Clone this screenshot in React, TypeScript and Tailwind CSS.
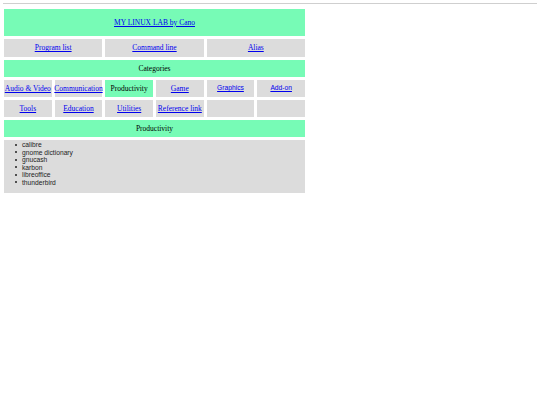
// Linux lab start page: nav table, category grid and the program list of the open category.

const navLinks = ["Program list", "Command line", "Alias"];

type Category = { label: string; sans?: boolean; active?: boolean };

const categoryRows: Category[][] = [
  [
    { label: "Audio & Video" },
    { label: "Communication" },
    { label: "Productivity", active: true },
    { label: "Game" },
    { label: "Graphics", sans: true },
    { label: "Add-on", sans: true },
  ],
  [{ label: "Tools" }, { label: "Education" }, { label: "Utilities" }, { label: "Reference link" }, { label: "" }, { label: "" }],
];

const programs = ["calibre", "gnome dictionary", "gnucash", "karbon", "libreoffice", "thunderbird"];

const serif = "font-['Liberation_Serif',serif] text-[7.5px]";
const sans = "font-['Liberation_Sans',Arial,sans-serif] text-[6.7px]";

function Cell({ cat }: { cat: Category }) {
  if (cat.active) {
    return <div className={`flex h-[17px] items-center justify-center bg-[#77fbb6] text-black ${serif}`}>{cat.label}</div>;
  }
  return (
    <div className="flex h-[17px] items-center justify-center bg-[#dcdcdc]">
      {cat.label && <a href="#" className={`text-[#0000ee] underline ${cat.sans ? sans : serif}`}>{cat.label}</a>}
    </div>
  );
}

export default function App() {
  return (
    <div className="h-[405px] w-[540px] bg-white">
      <div className="mx-[3px] pt-[3px]">
        <div className="h-px bg-[#cfcfcf]" />
      </div>

      <div className="ml-[4px] mt-[5px] flex w-[301px] flex-col gap-[3px]">
        <div className="flex h-[27px] items-center justify-center bg-[#77fbb6]">
          <a href="#" className={`text-[#0000ee] underline ${serif}`}>MY LINUX LAB by Cano</a>
        </div>

        <div className="grid h-[18px] grid-cols-3 gap-[3px]">
          {navLinks.map((l) => (
            <div key={l} className="flex items-center justify-center bg-[#dcdcdc]">
              <a href="#" className={`text-[#0000ee] underline ${serif}`}>{l}</a>
            </div>
          ))}
        </div>

        <div className={`flex h-[17px] items-center justify-center bg-[#77fbb6] text-black ${serif}`}>Categories</div>

        {categoryRows.map((row, i) => (
          <div key={i} className="grid grid-cols-6 gap-[3px]">
            {row.map((c, j) => (
              <Cell key={j} cat={c} />
            ))}
          </div>
        ))}

        <div className={`flex h-[17px] items-center justify-center bg-[#77fbb6] text-black ${serif}`}>Productivity</div>

        <div className="h-[53px] bg-[#dcdcdc] pt-[1px]">
          <ul className={`pl-[11px] leading-[7.5px] text-[#222] ${sans}`}>
            {programs.map((p) => (
              <li key={p} className="flex items-center">
                <span className="mr-[5px] h-[2px] w-[2px] rounded-full bg-[#222]" />
                {p}
              </li>
            ))}
          </ul>
        </div>
      </div>
    </div>
  );
}
